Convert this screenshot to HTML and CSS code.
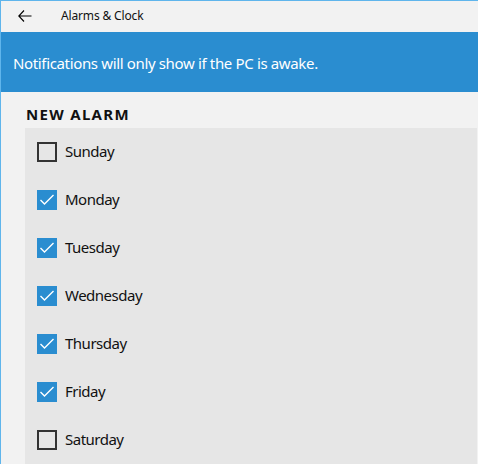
FILE: index.html
```html
<!DOCTYPE html>
<html>
<head>
<meta charset="utf-8">
<link rel="stylesheet" href="styles.css">
</head>
<body>
<div class="window">
  <header class="titlebar">
    <span class="back">
      <svg width="14" height="12" viewBox="0 0 14 12"><path d="M6 0.5 L0.8 6 L6 11.5 M0.8 6 H13.5" fill="none" stroke="#000" stroke-width="1.1"/></svg>
    </span>
    <span class="title">Alarms &amp; Clock</span>
  </header>
  <div class="banner">Notifications will only show if the PC is awake.</div>
  <main class="content">
    <h2 class="heading">NEW ALARM</h2>
    <div class="panel">
      <label class="row"><span class="box"></span><span class="day">Sunday</span></label>
      <label class="row"><span class="box checked"><svg width="20" height="20" viewBox="0 0 20 20"><path d="M3.5 10 L7.5 14 L16.5 5" fill="none" stroke="#fff" stroke-width="1.4"/></svg></span><span class="day">Monday</span></label>
      <label class="row"><span class="box checked"><svg width="20" height="20" viewBox="0 0 20 20"><path d="M3.5 10 L7.5 14 L16.5 5" fill="none" stroke="#fff" stroke-width="1.4"/></svg></span><span class="day">Tuesday</span></label>
      <label class="row"><span class="box checked"><svg width="20" height="20" viewBox="0 0 20 20"><path d="M3.5 10 L7.5 14 L16.5 5" fill="none" stroke="#fff" stroke-width="1.4"/></svg></span><span class="day">Wednesday</span></label>
      <label class="row"><span class="box checked"><svg width="20" height="20" viewBox="0 0 20 20"><path d="M3.5 10 L7.5 14 L16.5 5" fill="none" stroke="#fff" stroke-width="1.4"/></svg></span><span class="day">Thursday</span></label>
      <label class="row"><span class="box checked"><svg width="20" height="20" viewBox="0 0 20 20"><path d="M3.5 10 L7.5 14 L16.5 5" fill="none" stroke="#fff" stroke-width="1.4"/></svg></span><span class="day">Friday</span></label>
      <label class="row"><span class="box"></span><span class="day">Saturday</span></label>
    </div>
  </main>
</div>
</body>
</html>
```

FILE: styles.css
```css
* { box-sizing: border-box; }
html, body { margin: 0; padding: 0; }
body {
  width: 478px;
  height: 464px;
  overflow: hidden;
  background: #f2f2f2;
  font-family: "Noto Sans", "Open Sans", sans-serif;
  color: #000;
}
.window {
  height: 464px;
  border-top: 1px solid #5fb5ec;
  border-left: 1px solid #5fb5ec;
  background: #f2f2f2;
}
.titlebar {
  height: 31px;
  display: flex;
  align-items: center;
  background: #f2f2f2;
}
.back {
  display: flex;
  width: 60px;
  padding-left: 17px;
  margin-top: -2px;
}
.title {
  font-size: 12px;
  letter-spacing: -0.15px;
  color: #111;
  margin-top: -2px;
}
.banner {
  height: 60px;
  background: #2a8dd0;
  color: #fff;
  font-size: 15px;
  letter-spacing: -0.35px;
  display: flex;
  align-items: center;
  padding-left: 12px;
  padding-top: 2px;
}
.content {
  padding-left: 24px;
  padding-right: 0;
}
.heading {
  margin: 0;
  height: 36px;
  display: flex;
  align-items: center;
  padding-left: 1px;
  padding-top: 7px;
  font-size: 15px;
  font-weight: bold;
  letter-spacing: 1.3px;
  color: #111;
}
.panel {
  width: 452px;
  background: #e6e6e6;
  padding-left: 12px;
}
.row {
  height: 48px;
  display: flex;
  align-items: center;
}
.box {
  width: 20px;
  height: 20px;
  border: 2px solid #333;
  display: flex;
  flex: none;
}
.box.checked {
  border: none;
  background: #2a8dd0;
}
.day {
  margin-left: 8px;
  font-size: 15px;
  letter-spacing: -0.5px;
  color: #111;
  margin-top: -2px;
}
```
